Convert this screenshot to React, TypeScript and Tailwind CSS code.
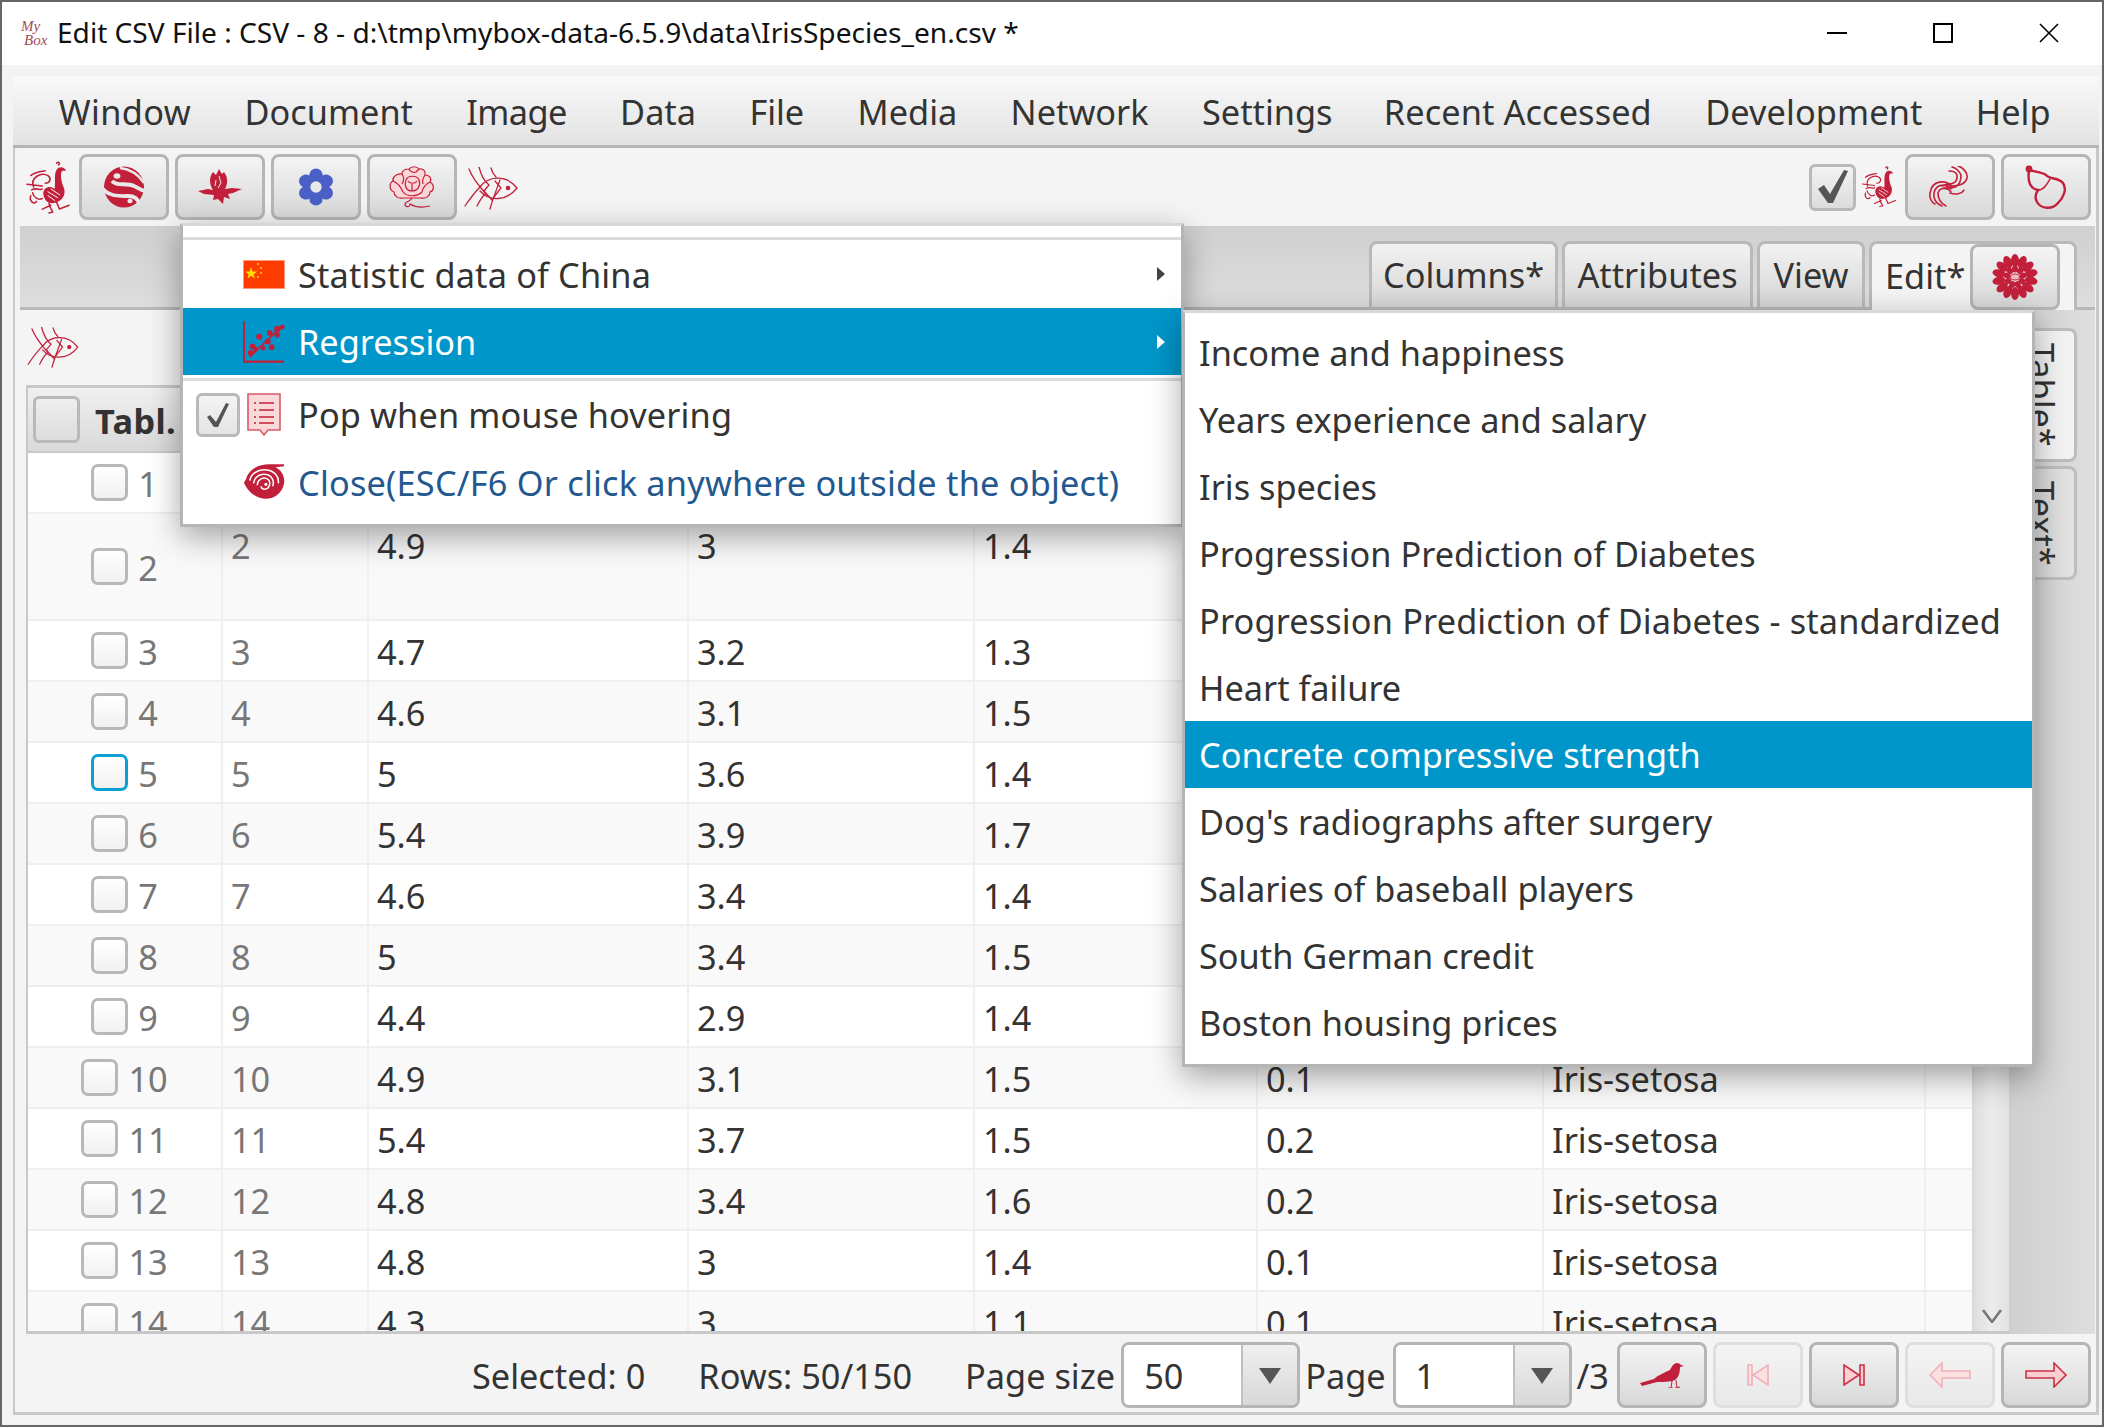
import React from "react";

const RED = "#c2203a";

function Phoenix({ className }: { className?: string }) {
  return (
    <svg viewBox="0 0 48 56" className={className} fill="none" stroke={RED} strokeWidth="1.6" strokeLinecap="round">
      <path fill={RED} stroke="none" d="M19 33 C20 27 26 25 31 29 C32 21 30 14 33 9 C36 5 41 6 43 10 L39 10 C36 13 38 22 41 29 C43 38 35 44 28 44 C23 44 19 39 19 33Z" />
      <path stroke="#fff" strokeWidth="1" d="M24 32 L34 38 M27 29 L36 35 M24 36 L31 41" />
      <path d="M9 27 C5 17 17 11 24 15 C28 18 26 23 21 23" />
      <path d="M6 15 C11 11 16 11 21 10 M2 24 L18 26 M7 30 C12 27 16 31 18 29" />
      <path d="M6 36 C4 42 10 46 12 42 M8 33 C9 38 14 41 18 39" />
      <path d="M25 44 C26 48 27 50 29 53 M33 43 L36 50 L46 46 M29 53 L25 54 M27 46 L18 50" />
      <path d="M33 2 C35 0 37 2 35 4" />
    </svg>
  );
}

function Swirl({ className }: { className?: string }) {
  const bg = "#e9e9e9";
  return (
    <svg viewBox="0 0 42 42" className={className}>
      <ellipse cx="21" cy="21" rx="20" ry="20.5" fill={RED} />
      <path d="M17 2 C26 3 35 8 41 17" fill="none" stroke={bg} strokeWidth="2.4" />
      <path d="M9 15 C14 21 23 16 31 20 C36 22 38 25 43 25" fill="none" stroke={bg} strokeWidth="3.8" />
      <path d="M0 23 C7 31 17 30 25 30 C31 30 35 32 36 38" fill="none" stroke={bg} strokeWidth="3.8" />
      <ellipse cx="14" cy="10" rx="3.4" ry="2.8" fill={bg} />
      <ellipse cx="27" cy="35" rx="2.6" ry="2.2" fill={bg} />
    </svg>
  );
}

function Leaf({ className }: { className?: string }) {
  return (
    <svg viewBox="0 0 44 36" className={className} fill={RED}>
      <path d="M21 0 L24 5 L26 3 C30 8 30 15 27 20 L34 19 L44 20 L35 24 L30 25 L32 30 L26 28 L25 35 L20 30 L15 31 L16 26 L6 25 L0 22 L10 20 L15 21 C11 15 11 8 15 3 L18 6Z" />
      <path d="M21 7 L23 14 L20 19 M18 11 L17 17" stroke="#e8e8e8" strokeWidth="1" fill="none" />
    </svg>
  );
}

function GearFlower({ className }: { className?: string }) {
  return (
    <svg viewBox="0 0 40 40" className={className}>
      {[0, 60, 120, 180, 240, 300].map((a) => (
        <circle key={a} cx="20" cy="7.5" r="7" fill="#4b60c6" transform={`rotate(${a} 20 20)`} />
      ))}
      <circle cx="20" cy="20" r="11" fill="#4b60c6" />
      <circle cx="20" cy="20" r="6" fill="#e8e8e8" />
    </svg>
  );
}

function Peony({ className }: { className?: string }) {
  return (
    <svg viewBox="0 0 46 44" className={className} fill="#fcd6d6" stroke={RED} strokeWidth="1.2">
      <path d="M13 8 C13 3 18 3 20 3 C22 0 28 0 30 3 C34 2 37 5 36 9 C41 9 43 13 41 16 C46 19 45 25 41 26 C41 30 37 33 32 32 L14 32 C9 33 5 30 5 26 C0 24 0 17 4 15 C3 11 8 7 13 8Z" />
      <path d="M13 8 C15 11 15 15 13 18 M36 9 C34 12 33 15 34 18 M4 15 C9 17 12 21 14 26 M41 16 C37 18 34 21 33 26 M14 26 C18 31 28 31 33 26" fill="none" />
      <path d="M17 14 C19 9 28 9 30 14 C32 19 29 25 23 25 C17 25 15 19 17 14Z" />
      <path d="M19 15 C21 18 26 18 28 15 M23 18 L23 25 M20 3 C21 6 25 7 27 6 C28 5 29 4 30 3" fill="none" />
      <path d="M23 32 C21 36 17 35 16 38 C16 41 21 42 21 38 C26 41 33 42 41 40" fill="none" />
    </svg>
  );
}

function Fish({ className }: { className?: string }) {
  return (
    <svg viewBox="0 0 54 44" className={className} fill="none" stroke={RED} strokeWidth="1.3" strokeLinecap="round">
      <path d="M16 20 C24 9 42 7 53 21 C43 34 26 35 16 24" />
      <path d="M5 2 C8 10 14 18 22 27 M1 39 C7 30 12 24 17 19 M15 0 C17 8 20 14 25 18 L20 24 L28 33 M26 42 C28 34 32 24 36 13 M13 39 C16 33 18 30 21 27 M27 1 C28 5 30 8 32 10" />
      <circle cx="44" cy="21" r="1.6" fill={RED} />
      <path d="M31 14 L37 21 L30 30" />
    </svg>
  );
}

function ThreeSwirl({ className }: { className?: string }) {
  return (
    <svg viewBox="0 0 44 42" className={className} fill="none" stroke={RED} strokeWidth="1.6" strokeLinecap="round">
      <path d="M16 22 C24 22 33 23 33 9 C31 5 28 2 24 1" />
      <path d="M19 20 C27 20 37 20 39 12 C40 6 34 1 30 0" />
      <path d="M14 20 C20 17 30 20 29 9 C28 6 25 5 21 5" />
      <path d="M25 21 C17 13 4 14 2 27 C1 31 3 36 7 38" />
      <path d="M23 23 C17 17 8 18 6 27 C5 32 8 38 14 40" />
      <path d="M23 26 C19 21 12 21 10 27 C10 32 12 37 18 40" />
      <path d="M22 27 C27 29 34 28 36 24" />
    </svg>
  );
}

function Gourd({ className }: { className?: string }) {
  return (
    <svg viewBox="0 0 44 46" className={className} fill="none" stroke={RED} strokeWidth="2.4" strokeLinecap="round">
      <circle cx="5" cy="5" r="3.4" fill={RED} stroke="none" />
      <path d="M5 6 C12 8 18 8 22 11 C26 16 34 13 39 19 C43 25 40 33 34 39 C28 46 17 45 13 38 C10 33 12 29 14 26 C8 25 3 20 5 6Z" />
      <path d="M14 26 C18 27 23 21 26 15" strokeWidth="1.6" />
    </svg>
  );
}

function Chrysanthemum({ className }: { className?: string }) {
  const outer = Array.from({ length: 14 }, (_, i) => (i * 360) / 14);
  const inner = Array.from({ length: 9 }, (_, i) => (i * 360) / 9);
  return (
    <svg viewBox="0 0 46 46" className={className} fill={RED}>
      {outer.map((a) => (
        <ellipse key={a} cx="23" cy="6.5" rx="4" ry="6.5" transform={`rotate(${a} 23 23)`} />
      ))}
      {inner.map((a) => (
        <ellipse key={a} cx="23" cy="15" rx="3" ry="3.4" transform={`rotate(${a} 23 23)`} />
      ))}
      <ellipse cx="23" cy="23" rx="4.5" ry="3" fill="#f0b8c0" stroke={RED} strokeWidth="1" />
    </svg>
  );
}

function Bird({ className }: { className?: string }) {
  return (
    <svg viewBox="0 0 44 26" className={className} fill={RED}>
      <path d="M0 21 L14 17 C18 13 24 11 30 8 C32 4 34 1 37 1 C39 1 40 2 41 3 L44 4 L40 5 C40 10 39 15 35 18 C30 20 22 20 17 20 L2 24Z" />
      <path d="M32 19 L31 26 M36 18 L37 26 M28 26 L33 26 M35 26 L40 25" fill="none" stroke={RED} strokeWidth="1" />
    </svg>
  );
}

function Flag() {
  return (
    <svg viewBox="0 0 42 29" className="w-[42px] h-[29px]">
      <rect width="42" height="29" fill="#ff3c00" />
      <rect x=".5" y=".5" width="41" height="28" fill="none" stroke="#ff9a7a" />
      <path d="M8 7 L9.6 11.4 L14.4 11.4 L10.6 14.2 L12 18.6 L8 16 L4.4 18.6 L5.6 14.2 L2 11.4 L6.6 11.4Z" fill="#ffdc00" />
      <circle cx="15" cy="4" r="1" fill="#ffdc00" />
      <circle cx="18" cy="8" r="1" fill="#ffdc00" />
      <circle cx="18" cy="13" r="1" fill="#ffdc00" />
      <circle cx="15" cy="17" r="1" fill="#ffdc00" />
    </svg>
  );
}

function RegressionIcon() {
  const dots = [[8, 34, 3], [10, 27, 3], [17, 17, 3.2], [21, 29, 2.5], [26, 22, 3], [28, 13, 3], [30, 28, 3], [36, 9, 3.4], [36, 15, 2.8], [41, 7, 2.5], [13, 30, 2.5]];
  return (
    <svg viewBox="0 0 44 44" className="w-[43px] h-[43px]" fill={RED}>
      <path d="M1 1 L1 43 L43 43" fill="none" stroke={RED} strokeWidth="2.4" />
      <path d="M7 38 L42 5" stroke={RED} strokeWidth="2" />
      {dots.map(([x, y, r], i) => (
        <circle key={i} cx={x} cy={y} r={r} />
      ))}
    </svg>
  );
}

function PopIcon() {
  return (
    <svg viewBox="0 0 34 44" className="w-[34px] h-[44px]">
      <path d="M1 1 H33 V37 H21 L17 42 L13 37 H1Z" fill="#fcd9d9" stroke="#d55a68" strokeWidth="1.6" />
      <path d="M7 10 H9 M12 10 H27 M7 17 H9 M12 17 H27 M7 24 H9 M12 24 H27 M7 30 H9 M12 30 H27" stroke={RED} strokeWidth="1.6" />
    </svg>
  );
}

function SpiralClose() {
  return (
    <svg viewBox="0 0 44 38" className="w-[43px] h-[37px]">
      <path d="M3 17 C6 6 16 1 28 1 L43 1 L43 3 L34 4 C40 7 44 13 43 21 C41 31 33 37 24 37 C14 37 5 30 1 20Z" fill={RED} />
      <path d="M7 18 C9 9 18 6 25 7 C33 8 38 14 37 21" fill="none" stroke="#fff" strokeWidth="1.6" />
      <path d="M11 21 C12 13 20 10 26 12 C31 14 33 19 31 24" fill="none" stroke="#fff" strokeWidth="1.6" />
      <path d="M15 23 C15 17 21 14 25 16 C29 18 29 23 26 26 C23 28 19 27 19 24" fill="none" stroke="#fff" strokeWidth="1.6" />
      <circle cx="24" cy="22" r="1.6" fill="#fff" />
    </svg>
  );
}

const btnClass =
  "flex items-center justify-center w-[90px] h-[66px] rounded-[8px] border-[3px] border-[#b5b5b5] bg-linear-to-b from-[#f4f4f4] to-[#d8d8d8] shrink-0";

function IconButton({ children }: { children: React.ReactNode }) {
  return <div className={btnClass}>{children}</div>;
}

function DisabledButton({ children }: { children: React.ReactNode }) {
  return (
    <div className="flex items-center justify-center w-[90px] h-[66px] rounded-[8px] border-[3px] border-[#dedede] bg-linear-to-b from-[#f4f4f4] to-[#e8e8e8] shrink-0 opacity-100">
      {children}
    </div>
  );
}

function Combo({ value }: { value: string }) {
  return (
    <div className="flex w-[179px] h-[66px] rounded-[8px] border-[3px] border-[#b5b5b5] overflow-hidden shrink-0">
      <div className="flex-1 bg-white pl-[20px] pt-[3px] flex items-center text-[#333]">{value}</div>
      <div className="w-[56px] border-l-2 border-[#c0c0c0] bg-linear-to-b from-[#efefef] to-[#d8d8d8] flex items-center justify-center">
        <svg viewBox="0 0 22 16" className="w-[22px] h-[16px] mt-[2px]">
          <path d="M0 0 H22 L11 16Z" fill="#555" />
        </svg>
      </div>
    </div>
  );
}

function Check({ focus }: { focus?: boolean }) {
  return (
    <span
      className={
        "block w-[37px] h-[37px] rounded-[7px] border-[3px] shrink-0 bg-linear-to-b from-[#ffffff] to-[#f1f1f1] " +
        (focus ? "border-[#0aa0d6]" : "border-[#b8b8b8]")
      }
    />
  );
}

const rows: [string, string, string, string, string][] = [
  ["1", "5.1", "3.5", "1.4", "0.2"],
  ["2", "4.9", "3", "1.4", "0.2"],
  ["3", "4.7", "3.2", "1.3", "0.2"],
  ["4", "4.6", "3.1", "1.5", "0.2"],
  ["5", "5", "3.6", "1.4", "0.2"],
  ["6", "5.4", "3.9", "1.7", "0.4"],
  ["7", "4.6", "3.4", "1.4", "0.3"],
  ["8", "5", "3.4", "1.5", "0.2"],
  ["9", "4.4", "2.9", "1.4", "0.2"],
  ["10", "4.9", "3.1", "1.5", "0.1"],
  ["11", "5.4", "3.7", "1.5", "0.2"],
  ["12", "4.8", "3.4", "1.6", "0.2"],
  ["13", "4.8", "3", "1.4", "0.1"],
  ["14", "4.3", "3", "1.1", "0.1"],
];

const cell = "border-r-2 border-[#efefef] shrink-0 pl-[8px] h-full overflow-hidden";

function Row({ r, i }: { r: [string, string, string, string, string]; i: number }) {
  const tall = i === 1;
  const inner = tall ? "pt-[15px]" : "flex items-center pt-[3px]";
  const underMain = i === 0;
  const underSub = i < 9;
  return (
    <div
      className={
        "flex shrink-0 border-b-2 border-[#efefef] text-[#333] " +
        (tall ? "h-[107px] " : "h-[61px] ") +
        (i % 2 === 0 ? "bg-white" : "bg-[#f9f9f9]")
      }
    >
      <div className="w-[195px] shrink-0 h-full border-r-2 border-[#efefef] flex items-center justify-center gap-[10px] text-[#777]">
        <Check focus={i === 4} />
        <span className="pt-[3px]">{r[0]}</span>
      </div>
      <div className={"w-[146px] text-[#777] " + cell + " " + inner}>{underMain ? "" : r[0]}</div>
      <div className={"w-[320px] " + cell + " " + inner}>{underMain ? "" : r[1]}</div>
      <div className={"w-[286px] " + cell + " " + inner}>{underMain ? "" : r[2]}</div>
      <div className={"w-[283px] " + cell + " " + inner}>{underMain ? "" : r[3]}</div>
      <div className={"w-[286px] " + cell + " " + inner}>{underSub ? "" : r[4]}</div>
      <div className={"w-[382px] " + cell + " " + inner}>{underSub ? "" : "Iris-setosa"}</div>
      <div className="flex-1" />
    </div>
  );
}

const tabClass =
  "h-[66px] rounded-t-[8px] border-[3px] border-b-0 border-[#b9b9b9] bg-linear-to-b from-[#f2f2f2] to-[#d6d6d6] flex items-center justify-center shrink-0 text-[#333]";

const sub = [
  "Income and happiness",
  "Years experience and salary",
  "Iris species",
  "Progression Prediction of Diabetes",
  "Progression Prediction of Diabetes - standardized",
  "Heart failure",
  "Concrete compressive strength",
  "Dog's radiographs after surgery",
  "Salaries of baseball players",
  "South German credit",
  "Boston housing prices",
];

const menus: [string, string][] = [
  ["Window", "tracking-[0.4px]"],
  ["Document", ""],
  ["Image", "tracking-[-0.6px]"],
  ["Data", ""],
  ["File", ""],
  ["Media", ""],
  ["Network", ""],
  ["Settings", ""],
  ["Recent Accessed", "tracking-[0.1px] -ml-[2px]"],
  ["Development", "tracking-[0.1px]"],
  ["Help", ""],
];

function Triangle({ white }: { white?: boolean }) {
  return (
    <svg viewBox="0 0 8 14" className="w-[8px] h-[14px] absolute right-[16px]">
      <path d="M0 0 L8 7 L0 14Z" fill={white ? "#fff" : "#444"} />
    </svg>
  );
}

export default function App() {
  return (
    <div className="relative w-[2104px] h-[1427px] overflow-hidden flex flex-col border-2 border-[#666] bg-white font-['Noto_Sans','Open_Sans',sans-serif] text-[34.3px] leading-none text-[#333]">
      {/* title */}
      <div className="h-[63px] shrink-0 flex items-center pb-[2px] bg-white text-[28.1px] text-[#111]">
        <div className="w-[37px] ml-[17px] mr-[1px] flex flex-col text-[#a04a58] text-[15px] leading-[14px] italic font-['Liberation_Serif',serif]">
          <span className="ml-[2px]">My</span>
          <span className="ml-[5px]">Box</span>
        </div>
        <span>Edit CSV File : CSV - 8 - d:\tmp\mybox-data-6.5.9\data\IrisSpecies_en.csv *</span>
        <div className="ml-auto flex items-center text-black">
          <div className="w-[106px] flex justify-center">
            <div className="w-[20px] h-[2px] bg-black" />
          </div>
          <div className="w-[106px] flex justify-center">
            <div className="w-[20px] h-[20px] border-2 border-black" />
          </div>
          <div className="w-[106px] flex justify-center">
            <svg viewBox="0 0 20 20" className="w-[20px] h-[20px]" stroke="#000" strokeWidth="1.6">
              <path d="M1 1 L19 19 M19 1 L1 19" />
            </svg>
          </div>
        </div>
      </div>

      {/* body */}
      <div className="flex-1 min-h-0 flex flex-col bg-[#f3f3f3] pt-[11px] pl-[11px] pr-[3px] pb-[10px]">
        {/* menu */}
        <div className="h-[72px] shrink-0 flex items-center pt-[3px] pl-[19px] border-b-[3px] border-[#b5b5b5] bg-linear-to-b from-[#f9f9f9] to-[#e2e2e2] text-[#333]">
          {menus.map(([m, t]) => (
            <span key={m} className={"px-[26.7px] whitespace-nowrap " + t}>
              {m}
            </span>
          ))}
        </div>

        <div className="flex-1 min-h-0 flex flex-col border-l-2 border-r-[3px] border-b-[3px] border-[#c8c8c8] pl-[5px] pr-[1px]">
          {/* toolbar */}
          <div className="h-[78px] shrink-0 flex items-center pl-[5px] pr-[4px] bg-[#f4f4f4]">
            <Phoenix className="w-[46px] h-[54px] mr-[8px] mt-[2px]" />
            <div className="flex gap-[6px]">
              <IconButton><Swirl className="w-[42px] h-[42px]" /></IconButton>
              <IconButton><Leaf className="w-[44px] h-[36px]" /></IconButton>
              <IconButton><GearFlower className="w-[38px] h-[40px]" /></IconButton>
              <IconButton><Peony className="w-[46px] h-[44px] mt-[2px]" /></IconButton>
            </div>
            <Fish className="w-[54px] h-[44px] ml-[7px] mt-[3px]" />
            <div className="ml-auto flex items-center">
              <div className="w-[47px] h-[47px] rounded-[6px] border-[3px] border-[#b9b9b9] bg-linear-to-b from-[#f2f2f2] to-[#dcdcdc] flex items-center justify-center">
                <svg viewBox="0 0 32 36" className="w-[32px] h-[36px]">
                  <path d="M1 20 L7 16 L13 25 L27 1 L31 2 L16 34 L11 34Z" fill="#555" />
                </svg>
              </div>
              <Phoenix className="w-[36px] h-[44px] ml-[5px] mr-[8px]" />
              <div className="flex gap-[6px]">
                <IconButton><ThreeSwirl className="w-[44px] h-[42px]" /></IconButton>
                <IconButton><Gourd className="w-[44px] h-[46px]" /></IconButton>
              </div>
            </div>
          </div>

          {/* tab header */}
          <div className="h-[84px] shrink-0 flex items-end justify-end gap-[4px] pr-[18px] border-b-[3px] border-[#b8b8b8] bg-linear-to-b from-[#d0d0d0] to-[#dddddd]">
            <div className={tabClass + " w-[189px]"}>Columns*</div>
            <div className={tabClass + " w-[191px]"}>Attributes</div>
            <div className={tabClass + " w-[108px]"}>View</div>
            <div className="h-[69px] -mb-[3px] w-[208px] rounded-t-[8px] border-[3px] border-b-0 border-[#b9b9b9] bg-[#f4f4f4] flex items-start pl-[13px] pr-[14px] justify-between shrink-0">
              <span className="mt-[15px]">Edit*</span>
              <div className="flex items-center justify-center w-[90px] h-[66px] rounded-[8px] border-[3px] border-[#b5b5b5] bg-linear-to-b from-[#f4f4f4] to-[#d8d8d8] shrink-0">
                <Chrysanthemum className="w-[46px] h-[46px]" />
              </div>
            </div>
          </div>

          {/* content */}
          <div className="flex-1 min-h-0 flex bg-[#f4f4f4]">
            <div className="flex-1 min-w-0 flex flex-col">
              <div className="h-[75px] shrink-0 flex items-center pl-[7px]">
                <Fish className="w-[52px] h-[42px]" />
              </div>
              <div className="ml-[6px] flex-1 min-h-0 flex flex-col border-2 border-r-0 border-t-[3px] border-b-[3px] border-[#c8c8c8] overflow-hidden">
                <div className="flex flex-1 min-h-0">
                  <div className="flex-1 min-w-0 flex flex-col overflow-hidden">
                    <div className="h-[65px] shrink-0 flex items-center pl-[5px] border-b-2 border-[#c8c8c8] bg-linear-to-b from-[#f0f0f0] to-[#d9d9d9]">
                      <div className="w-[47px] h-[47px] rounded-[6px] border-[3px] border-[#b9b9b9] bg-linear-to-b from-[#eeeeee] to-[#dcdcdc]" />
                      <span className="ml-[15px] pt-[4px] font-bold tracking-[0.4px]">Tabl.</span>
                    </div>
                    {rows.map((r, i) => (
                      <Row key={i} r={r} i={i} />
                    ))}
                  </div>
                  <div className="w-[37px] shrink-0 border-l-2 border-[#d8d8d8] bg-linear-to-r from-[#dedede] via-[#ececec] to-[#e2e2e2] flex flex-col justify-end items-center pb-[8px]">
                    <svg viewBox="0 0 20 14" className="w-[20px] h-[14px]" fill="none" stroke="#777" strokeWidth="2.6">
                      <path d="M1 1 L10 13 L19 1" />
                    </svg>
                  </div>
                </div>
              </div>
            </div>
            {/* rail */}
            <div className="w-[86px] shrink-0 pt-[18px] flex flex-col gap-[4px] items-start bg-linear-to-r from-[#cfcfcf] to-[#dedede]">
              <div className="w-[68px] h-[134px] border-[3px] border-l-0 border-[#bdbdbd] rounded-r-[8px] bg-[#f3f3f3] [writing-mode:vertical-rl] flex items-center justify-center">
                Table*
              </div>
              <div className="w-[68px] h-[114px] border-[3px] border-l-0 border-[#bdbdbd] rounded-r-[8px] bg-linear-to-r from-[#d4d4d4] to-[#e2e2e2] [writing-mode:vertical-rl] flex items-center justify-center">
                Text*
              </div>
            </div>
          </div>

          {/* status */}
          <div className="h-[78px] shrink-0 flex items-center justify-end pt-[4px] pr-[4px] bg-[#f4f4f4] text-[#333]">
            <span className="pt-[3px]">Selected: 0</span>
            <span className="ml-[53px] pt-[3px]">Rows: 50/150</span>
            <span className="ml-[53px] pt-[3px]">Page size</span>
            <div className="ml-[6px]"><Combo value="50" /></div>
            <span className="ml-[5px] pt-[3px]">Page</span>
            <div className="ml-[7px]"><Combo value="1" /></div>
            <span className="ml-[5px] pt-[3px]">/3</span>
            <div className="ml-[8px] flex gap-[6px]">
              <IconButton><Bird className="w-[44px] h-[26px]" /></IconButton>
              <DisabledButton>
                <svg viewBox="0 0 22 22" className="w-[22px] h-[22px]" fill="#fbe0e0" stroke="#efb0b8" strokeWidth="1.6">
                  <path d="M1 1 H5 V21 H1Z M21 1 V21 L6 11Z" />
                </svg>
              </DisabledButton>
              <IconButton>
                <svg viewBox="0 0 22 22" className="w-[22px] h-[22px]" fill="#fbcfcf" stroke="#cc3048" strokeWidth="1.6">
                  <path d="M17 1 H21 V21 H17Z M1 1 V21 L16 11Z" />
                </svg>
              </IconButton>
              <DisabledButton>
                <svg viewBox="0 0 42 26" className="w-[42px] h-[26px]" fill="#fbe0e0" stroke="#efb0b8" strokeWidth="1.6">
                  <path d="M1 13 L13 1 V9 H41 V16 H13 V25Z" />
                </svg>
              </DisabledButton>
              <IconButton>
                <svg viewBox="0 0 42 26" className="w-[42px] h-[26px]" fill="#fbcfcf" stroke="#cc3048" strokeWidth="1.6">
                  <path d="M41 13 L29 1 V9 H1 V16 H29 V25Z" />
                </svg>
              </IconButton>
            </div>
          </div>
        </div>
      </div>

      {/* popup */}
      <div className="absolute left-[178px] top-[221px] w-[1004px] h-[304px] bg-white border-[3px] border-[#b5b5b5] border-t-[#d8d8d8] shadow-[0_10px_30px_rgba(0,0,0,0.35)] flex flex-col text-[#333]">
        <div className="h-[14px] shrink-0 border-b-[3px] border-[#dcdcdc]" />
        <div className="relative h-[68px] flex items-center pl-[60px] shrink-0">
          <div className="w-[42px] mr-[13px] flex justify-center"><Flag /></div>
          <span className="pt-[2px] tracking-[0.17px]">Statistic data of China</span>
          <Triangle />
        </div>
        <div className="relative h-[67px] flex items-center pl-[60px] bg-[#0096c9] text-white shrink-0">
          <div className="w-[42px] mr-[13px] flex justify-center"><RegressionIcon /></div>
          <span className="pt-[2px]">Regression</span>
          <Triangle white />
        </div>
        <div className="h-[6px] shrink-0 border-b-[3px] border-[#dcdcdc]" />
        <div className="relative h-[67px] flex items-center pl-[13px] shrink-0">
          <div className="w-[44px] h-[44px] mr-[7px] rounded-[6px] border-[3px] border-[#b9b9b9] bg-linear-to-b from-[#f4f4f4] to-[#e4e4e4] flex items-center justify-center">
            <svg viewBox="0 0 24 26" className="w-[24px] h-[26px]">
              <path d="M1 15 L4 13 L10 20 L20 1 L23 2 L12 25 L8 25Z" fill="#555" />
            </svg>
          </div>
          <div className="w-[34px] mr-[17px]"><PopIcon /></div>
          <span className="pt-[2px] tracking-[0.13px]">Pop when mouse hovering</span>
        </div>
        <div className="relative h-[67px] flex items-center pl-[60px] text-[#23588f] shrink-0">
          <div className="w-[42px] mr-[13px] flex justify-center"><SpiralClose /></div>
          <span className="pt-[3px] tracking-[0.21px]">Close(ESC/F6 Or click anywhere outside the object)</span>
        </div>
      </div>

      {/* submenu */}
      <div className="absolute left-[1180px] top-[308px] w-[853px] h-[757px] bg-white border-[3px] border-[#b5b5b5] border-t-[#d8d8d8] shadow-[0_10px_30px_rgba(0,0,0,0.35)] pt-[6px] text-[#333]">
        {sub.map((s, i) => (
          <div key={s} className={"h-[67px] flex items-center pl-[14px] pt-[2px] " + (i === 4 ? "tracking-[0.14px] " : "") + (i === 6 ? "bg-[#0096c9] text-white" : "")}>
            {s}
          </div>
        ))}
      </div>
    </div>
  );
}
